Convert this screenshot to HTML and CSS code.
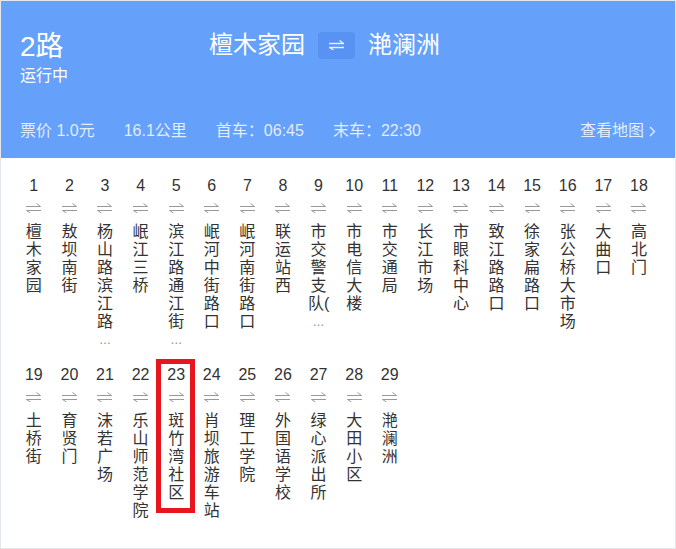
FILE: index.html
```html
<!DOCTYPE html>
<html>
  <head>
    <meta charset="utf-8">
    <meta name="viewport" content="width=device-width, initial-scale=1">
    <title>2路 公交线路</title>
    <link rel="stylesheet" href="styles.css">
  </head>
  <body>
    <div class="card">
      <div class="header">
        <div class="top">
          <div class="line-info">
            <div class="line-name">2路</div>
            <div class="line-state">运行中</div>
          </div>
          <div class="route">
            <span>檀木家园</span>
            <span class="swap">
              <svg width="15" height="10" viewBox="0 0 15 10"><path d="M0 3.5H14.5L10.5 0.5M15 7.5H0.5L4.5 10" fill="none" stroke="currentColor" stroke-width="1.4"/></svg>
            </span>
            <span>滟澜洲</span>
          </div>
        </div>
        <div class="info">
          <span>票价 1.0元</span>
          <span>16.1公里</span>
          <span>首车：06:45</span>
          <span>末车：22:30</span>
          <a class="map-link" href="#">查看地图
            <svg width="7" height="11" viewBox="0 0 7 11"><path d="M1 1L5.5 5.5L1 10" fill="none" stroke="currentColor" stroke-width="1.3"/></svg>
          </a>
        </div>
      </div>
      <div class="stations"></div>
    </div>
    <script>
      const names = [
        "檀木家园", "敖坝南街", "杨山路滨江路口", "岷江三桥", "滨江路通江街口",
        "岷河中街路口", "岷河南街路口", "联运站西", "市交警支队(南)", "市电信大楼",
        "市交通局", "长江市场", "市眼科中心", "致江路路口", "徐家扁路口",
        "张公桥大市场", "大曲口", "高北门", "土桥街", "育贤门",
        "沫若广场", "乐山师范学院", "斑竹湾社区", "肖坝旅游车站", "理工学院",
        "外国语学校", "绿心派出所", "大田小区", "滟澜洲"
      ];
      const current = 23;
      const list = document.querySelector(".stations");
      const arrow = '<svg width="15" height="10" viewBox="0 0 15 10"><path d="M0 3.5H14.5L10.5 0.5M15 7.5H0.5L4.5 10" fill="none" stroke="currentColor" stroke-width="1"/></svg>';

      names.forEach((name, i) => {
        // cut long names at 6 characters, then one line per CJK char
        const cut = name.length > 6;
        const parts = name.slice(0, 6).match(/[\u4e00-\u9fff][^\u4e00-\u9fff]*/g);
        const item = document.createElement("div");
        item.className = "station" + (i + 1 === current ? " current" : "");
        item.innerHTML =
          '<div class="num">' + (i + 1) + '</div>' +
          '<div class="arrow">' + arrow + '</div>' +
          '<div class="name">' + parts.map(p => "<span>" + p + "</span>").join("") +
          (cut ? '<span class="more">…</span>' : "") + '</div>';
        list.appendChild(item);
      });
    </script>
  </body>
</html>
```

FILE: styles.css
```css
body {
  margin: 0;
  font-family: "Liberation Sans", "Noto Sans CJK SC", sans-serif;
  color: #333;
}

.card {
  height: 549px;
  box-sizing: border-box;
  border: 1px solid #e4e7ec;
  background: #fff;
}

.header {
  height: 157px;
  background: #65a1fb;
  color: #fff;
  padding: 0 19px;
  box-sizing: border-box;
}

.top {
  display: flex;
  align-items: flex-start;
  padding-top: 29px;
  height: 88px;
  box-sizing: border-box;
}

.line-info {
  width: 189px;
}

.line-name {
  font-size: 28px;
  line-height: 34px;
}

.line-state {
  font-size: 16px;
  line-height: 20px;
  margin-top: 2px;
}

.route {
  display: flex;
  align-items: center;
  gap: 13px;
  font-size: 24px;
  line-height: 30px;
}

.swap {
  width: 37px;
  height: 27px;
  border-radius: 4px;
  background: #5892f2;
  color: rgba(255, 255, 255, 0.85);
  display: flex;
  align-items: center;
  justify-content: center;
}

.info {
  display: flex;
  align-items: center;
  gap: 29px;
  margin-top: 30px;
  font-size: 16px;
  line-height: 24px;
  color: rgba(255, 255, 255, 0.82);
}

.map-link {
  margin-left: auto;
  color: inherit;
  text-decoration: none;
  display: flex;
  align-items: center;
  gap: 5px;
}

.stations {
  display: flex;
  flex-wrap: wrap;
  width: 641px;
  padding: 18px 0 0 15px;
  row-gap: 16px;
}

.station {
  width: 35.6px;
  text-align: center;
  position: relative;
}

.num {
  font-size: 16px;
  line-height: 20px;
}

.arrow {
  color: #999;
  height: 10px;
  padding: 7px 0 10px;
}

.arrow svg {
  display: block;
  margin: 0 auto;
}

.name {
  font-size: 16px;
  line-height: 18px;
}

.name span {
  display: block;
  white-space: nowrap;
}

.name .more {
  color: #888;
  font-size: 12px;
}

.station.current::after {
  content: "";
  position: absolute;
  top: -6px;
  left: -2px;
  width: 39px;
  height: 154px;
  box-sizing: border-box;
  border: 5px solid #e8141e;
}
```
